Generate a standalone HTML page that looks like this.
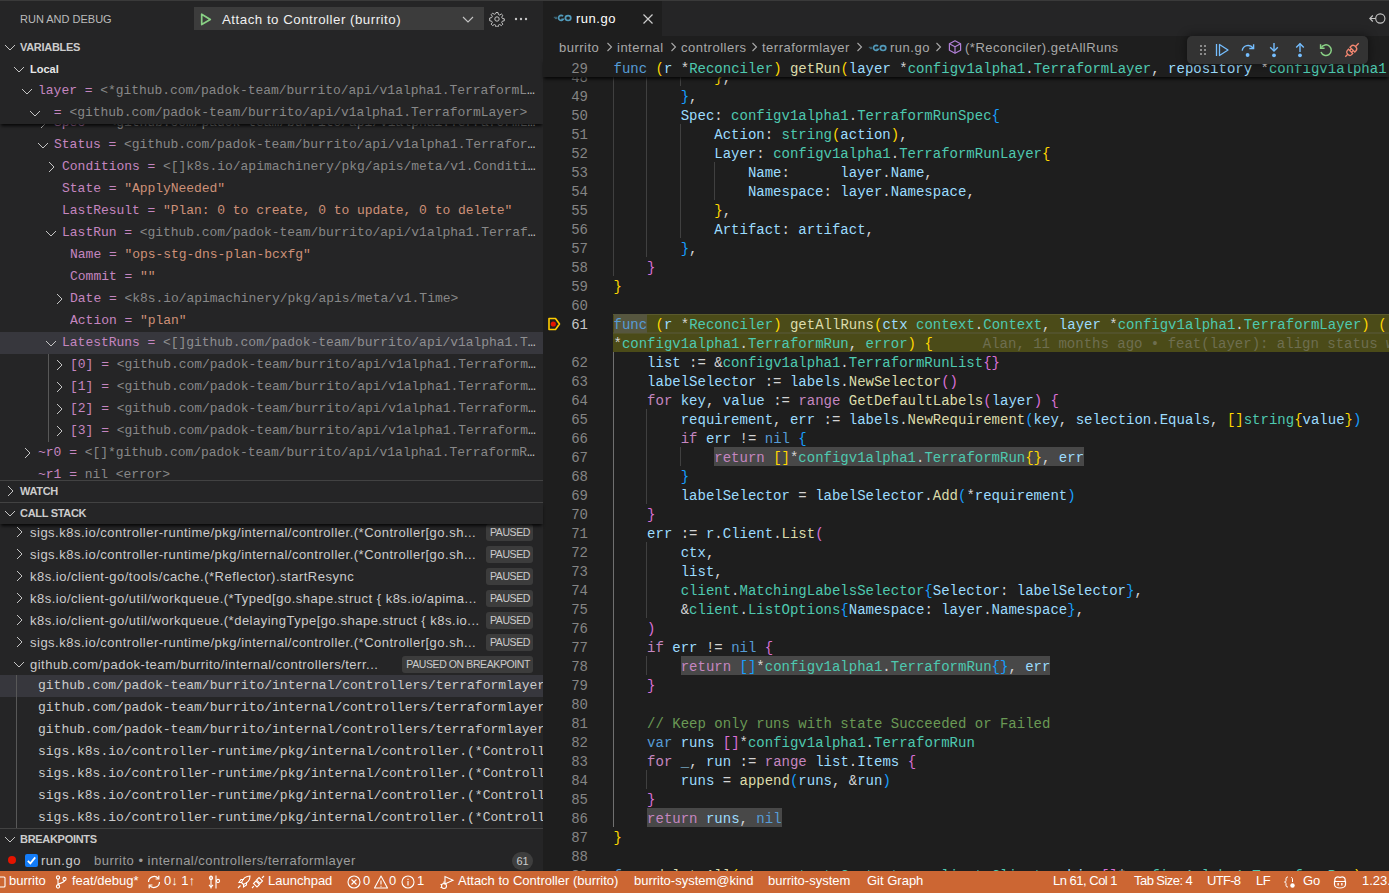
<!DOCTYPE html><html><head><meta charset="utf-8"><style>
*{box-sizing:border-box}
html,body{margin:0;padding:0;width:1389px;height:893px;overflow:hidden;background:#1e1e1e}
body{position:relative;font-family:"Liberation Sans",sans-serif;font-size:13px;color:#cccccc}
.abs{position:absolute;white-space:nowrap}
.ui{font-family:"Liberation Sans",sans-serif;font-size:13px;letter-spacing:0.5px;line-height:16px}
.ph{position:absolute;left:0;width:543px;height:22px}
.ph .lbl{position:absolute;left:20px;top:5px;font-size:11px;line-height:12px;font-weight:bold;color:#cccccc;letter-spacing:-0.3px}
.bt{border-top:1px solid #424242}
.tw{position:absolute;top:3px;width:16px;height:16px}
.tw svg{display:block}
.vr{position:absolute;left:0;width:543px;height:22px;white-space:nowrap}
.vr.sel{background:#37373d}
.vt{position:absolute;top:4px;right:6px;font-family:"Liberation Mono",monospace;font-size:13px;line-height:16px;letter-spacing:-0.04px;overflow:hidden;text-overflow:ellipsis;white-space:pre}
.sticky{position:absolute;left:0;width:543px;background:#252526;box-shadow:0 3px 3px -1px rgba(0,0,0,0.8)}
.cr{position:absolute;left:0;width:543px;height:22px;white-space:nowrap}
.ct{position:absolute;left:30px;top:4px;font-size:13px;line-height:16px;letter-spacing:0.5px;color:#cccccc}
.badge{position:absolute;right:10px;top:3px;height:17px;padding:0 3px 0 4px;background:#3c3c3c;border-radius:3px;font-size:10.5px;line-height:17px;color:#cccccc;letter-spacing:-0.4px;word-spacing:0px}
.fr{position:absolute;left:0;width:543px;height:22px;white-space:nowrap}
.fr.sel{background:#37373d}
.ft{position:absolute;left:38px;top:3px;font-family:"Liberation Mono",monospace;font-size:13px;line-height:16px;color:#cccccc}
.ln{position:absolute;left:0;width:588px;text-align:right;font-family:"Liberation Mono",monospace;font-size:14px;line-height:19px;height:19px;color:#858585;padding-top:2px}
.ln.act{color:#c6c6c6}
.cl{position:absolute;font-family:"Liberation Mono",monospace;font-size:14px;line-height:19px;height:19px;white-space:pre;color:#d4d4d4;padding-top:2px}
.ig{position:absolute;width:1px;height:19px;background:#404040}
.ig.act{background:#707070}
.hl{background:#484848;display:inline-block;height:19px;margin-top:-2px;padding-top:2px;vertical-align:top}
.hlf{background:#56563f;display:inline-block;height:19px;margin-top:-2px;padding-top:2px;vertical-align:top}
.sf{position:absolute;left:613px;width:846px;height:38px;background:#4b4b18}
.blame{color:#6e6e50;margin-left:50px}
.sfb{position:absolute;left:613px;width:846px;height:1px;background:#5a5a2c}
.sb{position:absolute;top:870px;height:22px;font-size:13px;line-height:22px;color:#ffffff;white-space:nowrap;letter-spacing:0px}
.sbi{position:absolute;top:874px}
</style></head><body>
<div class="abs" style="left:0;top:0;width:1389px;height:1px;background:#3a3a3a"></div>
<div class="abs" style="left:0;top:1px;width:543px;height:870px;background:#252526"></div>

<!-- sidebar header -->
<div class="abs" style="left:20px;top:13px;font-size:11px;line-height:12px;color:#bbbbbb;letter-spacing:0px">RUN AND DEBUG</div>
<div class="abs" style="left:194px;top:7px;width:290px;height:23px;background:#3c3c3c"></div>
<svg class="abs" style="left:198px;top:11px" width="16" height="16" viewBox="0 0 16 16"><path d="M3.7 3.2v10.4l8.6-5.2z" fill="none" stroke="#89d185" stroke-width="1.7" stroke-linejoin="round"/></svg>
<div class="abs ui" style="left:222px;top:12px;color:#f0f0f0;font-size:13.3px">Attach to Controller (burrito)</div>
<svg class="abs" style="left:460px;top:11px" width="16" height="16" viewBox="0 0 16 16"><path d="M3 6l5 5 5-5" fill="none" stroke="#c5c5c5" stroke-width="1.1"/></svg>
<svg class="abs" style="left:489px;top:11px" width="16" height="16" viewBox="0 0 16 16"><g fill="none" stroke="#c5c5c5" stroke-width="1"><circle cx="8" cy="8" r="2.2"/><path d="M7 1.5h2l.4 2 1.3.6 1.7-1.1 1.4 1.4-1.1 1.7.6 1.3 2 .4v2l-2 .4-.6 1.3 1.1 1.7-1.4 1.4-1.7-1.1-1.3.6-.4 2H7l-.4-2-1.3-.6-1.7 1.1-1.4-1.4 1.1-1.7-.6-1.3-2-.4V7l2-.4.6-1.3-1.1-1.7 1.4-1.4 1.7 1.1 1.3-.6z"/></g></svg>
<svg class="abs" style="left:513px;top:10px" width="16" height="16" viewBox="0 0 16 16"><g fill="#c5c5c5"><circle cx="3" cy="9" r="1.2"/><circle cx="8" cy="9" r="1.2"/><circle cx="13" cy="9" r="1.2"/></g></svg>

<!-- VARIABLES -->
<div class="ph" style="top:36px"><span class="tw" style="left:2px"><svg width="16" height="16" viewBox="0 0 16 16"><path d="M3 6l5 5 5-5" fill="none" stroke="#c5c5c5" stroke-width="1"/></svg></span><span class="lbl">VARIABLES</span></div>
<div class="abs" style="left:0;top:58px;width:543px;height:422px;overflow:hidden">
 <div class="abs" style="left:0;top:-58px;width:543px;height:893px">
  <div class="vr " style="top:112px"><span class="tw" style="left:34.6px;top:3px"><svg width="16" height="16" viewBox="0 0 16 16"><path d="M6 3l5 5-5 5" fill="none" stroke="#c5c5c5" stroke-width="1"/></svg></span><span class="vt" style="top:3px;left:54.1px"><span style="color:#c586c0">Spec =</span> <span style="color:rgba(204,204,204,0.6)">&lt;github.com/padok-team/burrito/api/v1alpha1.TerraformLayerSpec&gt;</span></span></div>
<div class="vr " style="top:134px"><span class="tw" style="left:34.6px;top:3px"><svg width="16" height="16" viewBox="0 0 16 16"><path d="M3 6l5 5 5-5" fill="none" stroke="#c5c5c5" stroke-width="1"/></svg></span><span class="vt" style="top:3px;left:54.1px"><span style="color:#c586c0">Status =</span> <span style="color:rgba(204,204,204,0.6)">&lt;github.com/padok-team/burrito/api/v1alpha1.TerraformLayerStatus&gt;</span></span></div>
<div class="vr " style="top:156px"><span class="tw" style="left:42.6px;top:3px"><svg width="16" height="16" viewBox="0 0 16 16"><path d="M6 3l5 5-5 5" fill="none" stroke="#c5c5c5" stroke-width="1"/></svg></span><span class="vt" style="top:3px;left:62.1px"><span style="color:#c586c0">Conditions =</span> <span style="color:rgba(204,204,204,0.6)">&lt;[]k8s.io/apimachinery/pkg/apis/meta/v1.Condition&gt; (length: 1)</span></span></div>
<div class="vr " style="top:178px"><span class="vt" style="top:3px;left:62.1px"><span style="color:#c586c0">State =</span> <span style="color:#ce9178">&quot;ApplyNeeded&quot;</span></span></div>
<div class="vr " style="top:200px"><span class="vt" style="top:3px;left:62.1px"><span style="color:#c586c0">LastResult =</span> <span style="color:#ce9178">&quot;Plan: 0 to create, 0 to update, 0 to delete&quot;</span></span></div>
<div class="vr " style="top:222px"><span class="tw" style="left:42.6px;top:3px"><svg width="16" height="16" viewBox="0 0 16 16"><path d="M3 6l5 5 5-5" fill="none" stroke="#c5c5c5" stroke-width="1"/></svg></span><span class="vt" style="top:3px;left:62.1px"><span style="color:#c586c0">LastRun =</span> <span style="color:rgba(204,204,204,0.6)">&lt;github.com/padok-team/burrito/api/v1alpha1.TerraformLayerRun&gt;</span></span></div>
<div class="vr " style="top:244px"><span class="vt" style="top:3px;left:70.1px"><span style="color:#c586c0">Name =</span> <span style="color:#ce9178">&quot;ops-stg-dns-plan-bcxfg&quot;</span></span></div>
<div class="vr " style="top:266px"><span class="vt" style="top:3px;left:70.1px"><span style="color:#c586c0">Commit =</span> <span style="color:#ce9178">&quot;&quot;</span></span></div>
<div class="vr " style="top:288px"><span class="tw" style="left:50.6px;top:3px"><svg width="16" height="16" viewBox="0 0 16 16"><path d="M6 3l5 5-5 5" fill="none" stroke="#c5c5c5" stroke-width="1"/></svg></span><span class="vt" style="top:3px;left:70.1px"><span style="color:#c586c0">Date =</span> <span style="color:rgba(204,204,204,0.6)">&lt;k8s.io/apimachinery/pkg/apis/meta/v1.Time&gt;</span></span></div>
<div class="vr " style="top:310px"><span class="vt" style="top:3px;left:70.1px"><span style="color:#c586c0">Action =</span> <span style="color:#ce9178">&quot;plan&quot;</span></span></div>
<div class="vr sel" style="top:332px"><span class="tw" style="left:42.6px;top:3px"><svg width="16" height="16" viewBox="0 0 16 16"><path d="M3 6l5 5 5-5" fill="none" stroke="#c5c5c5" stroke-width="1"/></svg></span><span class="vt" style="top:3px;left:62.1px"><span style="color:#c586c0">LatestRuns =</span> <span style="color:rgba(204,204,204,0.6)">&lt;[]github.com/padok-team/burrito/api/v1alpha1.TerraformLayerRun&gt; (length: 4)</span></span></div>
<div class="vr " style="top:354px"><span class="tw" style="left:50.6px;top:3px"><svg width="16" height="16" viewBox="0 0 16 16"><path d="M6 3l5 5-5 5" fill="none" stroke="#c5c5c5" stroke-width="1"/></svg></span><span class="vt" style="top:3px;left:70.1px"><span style="color:#c586c0">[0] =</span> <span style="color:rgba(204,204,204,0.6)">&lt;github.com/padok-team/burrito/api/v1alpha1.TerraformLayerRun&gt;</span></span></div>
<div class="vr " style="top:376px"><span class="tw" style="left:50.6px;top:3px"><svg width="16" height="16" viewBox="0 0 16 16"><path d="M6 3l5 5-5 5" fill="none" stroke="#c5c5c5" stroke-width="1"/></svg></span><span class="vt" style="top:3px;left:70.1px"><span style="color:#c586c0">[1] =</span> <span style="color:rgba(204,204,204,0.6)">&lt;github.com/padok-team/burrito/api/v1alpha1.TerraformLayerRun&gt;</span></span></div>
<div class="vr " style="top:398px"><span class="tw" style="left:50.6px;top:3px"><svg width="16" height="16" viewBox="0 0 16 16"><path d="M6 3l5 5-5 5" fill="none" stroke="#c5c5c5" stroke-width="1"/></svg></span><span class="vt" style="top:3px;left:70.1px"><span style="color:#c586c0">[2] =</span> <span style="color:rgba(204,204,204,0.6)">&lt;github.com/padok-team/burrito/api/v1alpha1.TerraformLayerRun&gt;</span></span></div>
<div class="vr " style="top:420px"><span class="tw" style="left:50.6px;top:3px"><svg width="16" height="16" viewBox="0 0 16 16"><path d="M6 3l5 5-5 5" fill="none" stroke="#c5c5c5" stroke-width="1"/></svg></span><span class="vt" style="top:3px;left:70.1px"><span style="color:#c586c0">[3] =</span> <span style="color:rgba(204,204,204,0.6)">&lt;github.com/padok-team/burrito/api/v1alpha1.TerraformLayerRun&gt;</span></span></div>
<div class="vr " style="top:442px"><span class="tw" style="left:18.6px;top:3px"><svg width="16" height="16" viewBox="0 0 16 16"><path d="M6 3l5 5-5 5" fill="none" stroke="#c5c5c5" stroke-width="1"/></svg></span><span class="vt" style="top:3px;left:38.1px"><span style="color:#c586c0">~r0 =</span> <span style="color:rgba(204,204,204,0.6)">&lt;[]*github.com/padok-team/burrito/api/v1alpha1.TerraformRun&gt;</span></span></div>
<div class="vr " style="top:464px"><span class="vt" style="top:3px;left:38.1px"><span style="color:#c586c0">~r1 =</span> <span style="color:rgba(204,204,204,0.6)">nil &lt;error&gt;</span></span></div>
  <div class="abs" style="left:48px;top:354px;width:1px;height:88px;background:#585858"></div>
  <div class="sticky" style="top:58px;height:66px"></div>
  <div class="vr" style="top:58px"><span class="tw" style="left:11px"><svg width="16" height="16" viewBox="0 0 16 16"><path d="M3 6l5 5 5-5" fill="none" stroke="#c5c5c5" stroke-width="1"/></svg></span><span class="abs" style="left:30px;top:5px;font-size:11px;line-height:12px;font-weight:bold;color:#e7e7e7">Local</span></div>
  <div class="vr " style="top:80px"><span class="tw" style="left:19.1px;top:3px"><svg width="16" height="16" viewBox="0 0 16 16"><path d="M3 6l5 5 5-5" fill="none" stroke="#c5c5c5" stroke-width="1"/></svg></span><span class="vt" style="top:3px;left:38.1px"><span style="color:#c586c0">layer =</span> <span style="color:rgba(204,204,204,0.6)">&lt;*github.com/padok-team/burrito/api/v1alpha1.TerraformLayer&gt;</span></span></div>
  <div class="vr " style="top:102px"><span class="tw" style="left:26.6px;top:3px"><svg width="16" height="16" viewBox="0 0 16 16"><path d="M3 6l5 5 5-5" fill="none" stroke="#c5c5c5" stroke-width="1"/></svg></span><span class="vt" style="top:3px;left:46.1px"><span style="color:#c586c0"> =</span> <span style="color:rgba(204,204,204,0.6)">&lt;github.com/padok-team/burrito/api/v1alpha1.TerraformLayer&gt;</span></span></div>
 </div>
</div>

<!-- WATCH -->
<div class="ph bt" style="top:480px"><span class="tw" style="left:2px;top:2px"><svg width="16" height="16" viewBox="0 0 16 16"><path d="M6 3l5 5-5 5" fill="none" stroke="#c5c5c5" stroke-width="1"/></svg></span><span class="lbl" style="top:4px">WATCH</span></div>
<!-- CALL STACK -->
<div class="abs" style="left:0;top:524px;width:543px;height:304px;overflow:hidden">
 <div class="abs" style="left:0;top:-524px;width:543px;height:893px">
  <div class="cr" style="top:521px"><span class="tw" style="left:11px"><svg width="16" height="16" viewBox="0 0 16 16"><path d="M6 3l5 5-5 5" fill="none" stroke="#c5c5c5" stroke-width="1"/></svg></span><span class="ct">sigs.k8s.io/controller-runtime/pkg/internal/controller.(*Controller[go.sh...</span><span class="badge">PAUSED</span></div>
<div class="cr" style="top:543px"><span class="tw" style="left:11px"><svg width="16" height="16" viewBox="0 0 16 16"><path d="M6 3l5 5-5 5" fill="none" stroke="#c5c5c5" stroke-width="1"/></svg></span><span class="ct">sigs.k8s.io/controller-runtime/pkg/internal/controller.(*Controller[go.sh...</span><span class="badge">PAUSED</span></div>
<div class="cr" style="top:565px"><span class="tw" style="left:11px"><svg width="16" height="16" viewBox="0 0 16 16"><path d="M6 3l5 5-5 5" fill="none" stroke="#c5c5c5" stroke-width="1"/></svg></span><span class="ct">k8s.io/client-go/tools/cache.(*Reflector).startResync</span><span class="badge">PAUSED</span></div>
<div class="cr" style="top:587px"><span class="tw" style="left:11px"><svg width="16" height="16" viewBox="0 0 16 16"><path d="M6 3l5 5-5 5" fill="none" stroke="#c5c5c5" stroke-width="1"/></svg></span><span class="ct">k8s.io/client-go/util/workqueue.(*Typed[go.shape.struct { k8s.io/apima...</span><span class="badge">PAUSED</span></div>
<div class="cr" style="top:609px"><span class="tw" style="left:11px"><svg width="16" height="16" viewBox="0 0 16 16"><path d="M6 3l5 5-5 5" fill="none" stroke="#c5c5c5" stroke-width="1"/></svg></span><span class="ct">k8s.io/client-go/util/workqueue.(*delayingType[go.shape.struct { k8s.io...</span><span class="badge">PAUSED</span></div>
<div class="cr" style="top:631px"><span class="tw" style="left:11px"><svg width="16" height="16" viewBox="0 0 16 16"><path d="M6 3l5 5-5 5" fill="none" stroke="#c5c5c5" stroke-width="1"/></svg></span><span class="ct">sigs.k8s.io/controller-runtime/pkg/internal/controller.(*Controller[go.sh...</span><span class="badge">PAUSED</span></div>
<div class="cr" style="top:653px"><span class="tw" style="left:11px"><svg width="16" height="16" viewBox="0 0 16 16"><path d="M3 6l5 5 5-5" fill="none" stroke="#c5c5c5" stroke-width="1"/></svg></span><span class="ct">github.com/padok-team/burrito/internal/controllers/terr...</span><span class="badge">PAUSED ON BREAKPOINT</span></div>
<div class="fr sel" style="top:675px"><span class="ft">github.com/padok-team/burrito/internal/controllers/terraformlayer.(*Reconciler).getAllRuns</span></div>
<div class="fr" style="top:697px"><span class="ft">github.com/padok-team/burrito/internal/controllers/terraformlayer.(*Reconciler).getAllRuns</span></div>
<div class="fr" style="top:719px"><span class="ft">github.com/padok-team/burrito/internal/controllers/terraformlayer.(*Reconciler).getAllRuns</span></div>
<div class="fr" style="top:741px"><span class="ft">sigs.k8s.io/controller-runtime/pkg/internal/controller.(*Controller).reconcileHandler</span></div>
<div class="fr" style="top:763px"><span class="ft">sigs.k8s.io/controller-runtime/pkg/internal/controller.(*Controller).reconcileHandler</span></div>
<div class="fr" style="top:785px"><span class="ft">sigs.k8s.io/controller-runtime/pkg/internal/controller.(*Controller).reconcileHandler</span></div>
<div class="fr" style="top:807px"><span class="ft">sigs.k8s.io/controller-runtime/pkg/internal/controller.(*Controller).reconcileHandler</span></div>
  <div class="abs" style="left:16px;top:675px;width:1px;height:153px;background:#585858"></div>
 </div>
</div>
<div class="ph bt" style="top:502px;background:#252526;box-shadow:0 3px 3px -1px rgba(0,0,0,0.8)"><span class="tw" style="left:2px;top:2px"><svg width="16" height="16" viewBox="0 0 16 16"><path d="M3 6l5 5 5-5" fill="none" stroke="#c5c5c5" stroke-width="1"/></svg></span><span class="lbl" style="top:4px">CALL STACK</span></div>
<!-- BREAKPOINTS -->
<div class="ph bt" style="top:828px"><span class="tw" style="left:2px;top:2px"><svg width="16" height="16" viewBox="0 0 16 16"><path d="M3 6l5 5 5-5" fill="none" stroke="#c5c5c5" stroke-width="1"/></svg></span><span class="lbl" style="top:4px">BREAKPOINTS</span></div>
<div class="abs" style="left:0;top:850px;width:543px;height:21px">
 <div class="abs" style="left:8px;top:6px;width:8px;height:8px;border-radius:50%;background:#e51400"></div>
 <div class="abs" style="left:25px;top:4px;width:13px;height:13px;border-radius:2px;background:#137cf8"></div>
 <svg class="abs" style="left:25px;top:4px" width="13" height="13" viewBox="0 0 13 13"><path d="M2.8 6.8l2.6 2.6 4.8-6" fill="none" stroke="#fff" stroke-width="1.7"/></svg>
 <span class="abs ui" style="left:41px;top:3px;color:#cccccc">run.go</span>
 <span class="abs ui" style="left:94px;top:3px;color:#9d9d9d">burrito • internal/controllers/terraformlayer</span>
 <div class="abs" style="left:512px;top:2px;width:21px;height:18px;border-radius:9px;background:#3e3e3e;color:#cccccc;font-size:11px;line-height:18px;text-align:center">61</div>
</div>

<!-- EDITOR -->
<div class="abs" style="left:543px;top:1px;width:846px;height:35px;background:#252526"></div>
<div class="abs" style="left:543px;top:1px;width:119px;height:35px;background:#1e1e1e"></div>
<svg class="abs" style="left:553px;top:12px" width="20" height="12" viewBox="0 0 20 12"><g fill="none" stroke="#519aba" stroke-width="1.7"><path d="M10 4.3A2.5 2.5 0 1 0 10.2 7.3H8.4"/><ellipse cx="15.1" cy="6.1" rx="2.7" ry="2.4"/></g><path d="M0.8 5.3h3.5M1.8 6.6h2.5" stroke="#519aba" stroke-width="0.8" opacity="0.8"/></svg>
<div class="abs ui" style="left:576px;top:11px;color:#ffffff">run.go</div>
<svg class="abs" style="left:640px;top:11px" width="16" height="16" viewBox="0 0 16 16"><path d="M3.5 3.5l9 9M12.5 3.5l-9 9" stroke="#cccccc" stroke-width="1.2"/></svg>
<svg class="abs" style="left:1368px;top:10px" width="18" height="16" viewBox="0 0 18 16"><g fill="none" stroke="#c5c5c5" stroke-width="1.1"><circle cx="12.3" cy="8.5" r="4.6"/><path d="M1.8 8.5h5.9M4.8 5.5l-3 3 3 3"/></g></svg>

<!-- breadcrumbs -->
<div class="abs ui" style="left:559px;top:40px;color:#a9a9a9">burrito</div>
<svg class="abs" style="left:604px;top:39px" width="12" height="16" viewBox="0 0 12 16"><path d="M3.5 4l4 4-4 4" fill="none" stroke="#a9a9a9" stroke-width="1.1"/></svg>
<div class="abs ui" style="left:617px;top:40px;color:#a9a9a9">internal</div>
<svg class="abs" style="left:668px;top:39px" width="12" height="16" viewBox="0 0 12 16"><path d="M3.5 4l4 4-4 4" fill="none" stroke="#a9a9a9" stroke-width="1.1"/></svg>
<div class="abs ui" style="left:681px;top:40px;color:#a9a9a9">controllers</div>
<svg class="abs" style="left:749px;top:39px" width="12" height="16" viewBox="0 0 12 16"><path d="M3.5 4l4 4-4 4" fill="none" stroke="#a9a9a9" stroke-width="1.1"/></svg>
<div class="abs ui" style="left:762px;top:40px;color:#a9a9a9">terraformlayer</div>
<svg class="abs" style="left:854px;top:39px" width="12" height="16" viewBox="0 0 12 16"><path d="M3.5 4l4 4-4 4" fill="none" stroke="#a9a9a9" stroke-width="1.1"/></svg>
<svg class="abs" style="left:868px;top:42px" width="20" height="12" viewBox="0 0 20 12"><g fill="none" stroke="#519aba" stroke-width="1.7"><path d="M10 4.3A2.5 2.5 0 1 0 10.2 7.3H8.4"/><ellipse cx="15.1" cy="6.1" rx="2.7" ry="2.4"/></g><path d="M0.8 5.3h3.5M1.8 6.6h2.5" stroke="#519aba" stroke-width="0.8" opacity="0.8"/></svg>
<div class="abs ui" style="left:890px;top:40px;color:#a9a9a9">run.go</div>
<svg class="abs" style="left:933px;top:39px" width="12" height="16" viewBox="0 0 12 16"><path d="M3.5 4l4 4-4 4" fill="none" stroke="#a9a9a9" stroke-width="1.1"/></svg>
<svg class="abs" style="left:947px;top:39px" width="16" height="16" viewBox="0 0 16 16"><g fill="none" stroke="#b180d7" stroke-width="1.2" stroke-linejoin="round"><path d="M8 1.8l5.6 3v6.4L8 14.2l-5.6-3V4.8z"/><path d="M2.4 4.8L8 7.8l5.6-3M8 7.8v6.4"/></g></svg>
<div class="abs ui" style="left:965px;top:40px;color:#a9a9a9">(*Reconciler).getAllRuns</div>

<div class="abs" style="left:543px;top:58px;width:846px;height:813px;overflow:hidden">
 <div class="abs" style="left:-543px;top:-58px;width:1389px;height:893px">
  <div class="ln" style="top:67.0px">48</div>
<div class="ig" style="top:67.0px;left:613px"></div>
<div class="ig" style="top:67.0px;left:646px"></div>
<div class="ig" style="top:67.0px;left:680px"></div>
<div class="cl" style="top:67.0px;left:714.3px"><span style="color:#ffd700">}</span>,</div>
<div class="ln" style="top:86.0px">49</div>
<div class="ig" style="top:86.0px;left:613px"></div>
<div class="ig" style="top:86.0px;left:646px"></div>
<div class="cl" style="top:86.0px;left:680.7px"><span style="color:#179fff">}</span>,</div>
<div class="ln" style="top:105.0px">50</div>
<div class="ig" style="top:105.0px;left:613px"></div>
<div class="ig" style="top:105.0px;left:646px"></div>
<div class="cl" style="top:105.0px;left:680.7px"><span style="color:#9cdcfe">Spec</span>: <span style="color:#4ec9b0">configv1alpha1</span>.<span style="color:#4ec9b0">TerraformRunSpec</span><span style="color:#179fff">{</span></div>
<div class="ln" style="top:124.0px">51</div>
<div class="ig" style="top:124.0px;left:613px"></div>
<div class="ig" style="top:124.0px;left:646px"></div>
<div class="ig" style="top:124.0px;left:680px"></div>
<div class="cl" style="top:124.0px;left:714.3px"><span style="color:#9cdcfe">Action</span>: <span style="color:#4ec9b0">string</span><span style="color:#ffd700">(</span><span style="color:#9cdcfe">action</span><span style="color:#ffd700">)</span>,</div>
<div class="ln" style="top:143.0px">52</div>
<div class="ig" style="top:143.0px;left:613px"></div>
<div class="ig" style="top:143.0px;left:646px"></div>
<div class="ig" style="top:143.0px;left:680px"></div>
<div class="cl" style="top:143.0px;left:714.3px"><span style="color:#9cdcfe">Layer</span>: <span style="color:#4ec9b0">configv1alpha1</span>.<span style="color:#4ec9b0">TerraformRunLayer</span><span style="color:#ffd700">{</span></div>
<div class="ln" style="top:162.0px">53</div>
<div class="ig" style="top:162.0px;left:613px"></div>
<div class="ig" style="top:162.0px;left:646px"></div>
<div class="ig" style="top:162.0px;left:680px"></div>
<div class="ig" style="top:162.0px;left:714px"></div>
<div class="cl" style="top:162.0px;left:747.9px"><span style="color:#9cdcfe">Name</span>:      <span style="color:#9cdcfe">layer</span>.<span style="color:#9cdcfe">Name</span>,</div>
<div class="ln" style="top:181.0px">54</div>
<div class="ig" style="top:181.0px;left:613px"></div>
<div class="ig" style="top:181.0px;left:646px"></div>
<div class="ig" style="top:181.0px;left:680px"></div>
<div class="ig" style="top:181.0px;left:714px"></div>
<div class="cl" style="top:181.0px;left:747.9px"><span style="color:#9cdcfe">Namespace</span>: <span style="color:#9cdcfe">layer</span>.<span style="color:#9cdcfe">Namespace</span>,</div>
<div class="ln" style="top:200.0px">55</div>
<div class="ig" style="top:200.0px;left:613px"></div>
<div class="ig" style="top:200.0px;left:646px"></div>
<div class="ig" style="top:200.0px;left:680px"></div>
<div class="cl" style="top:200.0px;left:714.3px"><span style="color:#ffd700">}</span>,</div>
<div class="ln" style="top:219.0px">56</div>
<div class="ig" style="top:219.0px;left:613px"></div>
<div class="ig" style="top:219.0px;left:646px"></div>
<div class="ig" style="top:219.0px;left:680px"></div>
<div class="cl" style="top:219.0px;left:714.3px"><span style="color:#9cdcfe">Artifact</span>: <span style="color:#9cdcfe">artifact</span>,</div>
<div class="ln" style="top:238.0px">57</div>
<div class="ig" style="top:238.0px;left:613px"></div>
<div class="ig" style="top:238.0px;left:646px"></div>
<div class="cl" style="top:238.0px;left:680.7px"><span style="color:#179fff">}</span>,</div>
<div class="ln" style="top:257.0px">58</div>
<div class="ig" style="top:257.0px;left:613px"></div>
<div class="cl" style="top:257.0px;left:647.1px"><span style="color:#da70d6">}</span></div>
<div class="ln" style="top:276.0px">59</div>
<div class="cl" style="top:276.0px;left:613.5px"><span style="color:#ffd700">}</span></div>
<div class="ln" style="top:295.0px">60</div>
<div class="ln" style="top:352.0px">62</div>
<div class="ig act" style="top:352.0px;left:613px"></div>
<div class="cl" style="top:352.0px;left:647.1px"><span style="color:#9cdcfe">list</span> := &amp;<span style="color:#4ec9b0">configv1alpha1</span>.<span style="color:#4ec9b0">TerraformRunList</span><span style="color:#da70d6">{}</span></div>
<div class="ln" style="top:371.0px">63</div>
<div class="ig act" style="top:371.0px;left:613px"></div>
<div class="cl" style="top:371.0px;left:647.1px"><span style="color:#9cdcfe">labelSelector</span> := <span style="color:#9cdcfe">labels</span>.<span style="color:#dcdcaa">NewSelector</span><span style="color:#da70d6">()</span></div>
<div class="ln" style="top:390.0px">64</div>
<div class="ig act" style="top:390.0px;left:613px"></div>
<div class="cl" style="top:390.0px;left:647.1px"><span style="color:#c586c0">for</span> <span style="color:#9cdcfe">key</span>, <span style="color:#9cdcfe">value</span> := <span style="color:#c586c0">range</span> <span style="color:#dcdcaa">GetDefaultLabels</span><span style="color:#da70d6">(</span><span style="color:#9cdcfe">layer</span><span style="color:#da70d6">)</span> <span style="color:#da70d6">{</span></div>
<div class="ln" style="top:409.0px">65</div>
<div class="ig act" style="top:409.0px;left:613px"></div>
<div class="ig" style="top:409.0px;left:646px"></div>
<div class="cl" style="top:409.0px;left:680.7px"><span style="color:#9cdcfe">requirement</span>, <span style="color:#9cdcfe">err</span> := <span style="color:#9cdcfe">labels</span>.<span style="color:#dcdcaa">NewRequirement</span><span style="color:#179fff">(</span><span style="color:#9cdcfe">key</span>, <span style="color:#9cdcfe">selection</span>.<span style="color:#9cdcfe">Equals</span>, <span style="color:#ffd700">[]</span><span style="color:#4ec9b0">string</span><span style="color:#ffd700">{</span><span style="color:#9cdcfe">value</span><span style="color:#ffd700">}</span><span style="color:#179fff">)</span></div>
<div class="ln" style="top:428.0px">66</div>
<div class="ig act" style="top:428.0px;left:613px"></div>
<div class="ig" style="top:428.0px;left:646px"></div>
<div class="cl" style="top:428.0px;left:680.7px"><span style="color:#c586c0">if</span> <span style="color:#9cdcfe">err</span> != <span style="color:#569cd6">nil</span> <span style="color:#179fff">{</span></div>
<div class="ln" style="top:447.0px">67</div>
<div class="ig act" style="top:447.0px;left:613px"></div>
<div class="ig" style="top:447.0px;left:646px"></div>
<div class="ig" style="top:447.0px;left:680px"></div>
<div class="cl" style="top:447.0px;left:714.3px"><span class="hl"><span style="color:#c586c0">return</span> <span style="color:#ffd700">[]</span>*<span style="color:#4ec9b0">configv1alpha1</span>.<span style="color:#4ec9b0">TerraformRun</span><span style="color:#ffd700">{}</span>, <span style="color:#9cdcfe">err</span></span></div>
<div class="ln" style="top:466.0px">68</div>
<div class="ig act" style="top:466.0px;left:613px"></div>
<div class="ig" style="top:466.0px;left:646px"></div>
<div class="cl" style="top:466.0px;left:680.7px"><span style="color:#179fff">}</span></div>
<div class="ln" style="top:485.0px">69</div>
<div class="ig act" style="top:485.0px;left:613px"></div>
<div class="ig" style="top:485.0px;left:646px"></div>
<div class="cl" style="top:485.0px;left:680.7px"><span style="color:#9cdcfe">labelSelector</span> = <span style="color:#9cdcfe">labelSelector</span>.<span style="color:#dcdcaa">Add</span><span style="color:#179fff">(</span>*<span style="color:#9cdcfe">requirement</span><span style="color:#179fff">)</span></div>
<div class="ln" style="top:504.0px">70</div>
<div class="ig act" style="top:504.0px;left:613px"></div>
<div class="cl" style="top:504.0px;left:647.1px"><span style="color:#da70d6">}</span></div>
<div class="ln" style="top:523.0px">71</div>
<div class="ig act" style="top:523.0px;left:613px"></div>
<div class="cl" style="top:523.0px;left:647.1px"><span style="color:#9cdcfe">err</span> := <span style="color:#9cdcfe">r</span>.<span style="color:#9cdcfe">Client</span>.<span style="color:#dcdcaa">List</span><span style="color:#da70d6">(</span></div>
<div class="ln" style="top:542.0px">72</div>
<div class="ig act" style="top:542.0px;left:613px"></div>
<div class="ig" style="top:542.0px;left:646px"></div>
<div class="cl" style="top:542.0px;left:680.7px"><span style="color:#9cdcfe">ctx</span>,</div>
<div class="ln" style="top:561.0px">73</div>
<div class="ig act" style="top:561.0px;left:613px"></div>
<div class="ig" style="top:561.0px;left:646px"></div>
<div class="cl" style="top:561.0px;left:680.7px"><span style="color:#9cdcfe">list</span>,</div>
<div class="ln" style="top:580.0px">74</div>
<div class="ig act" style="top:580.0px;left:613px"></div>
<div class="ig" style="top:580.0px;left:646px"></div>
<div class="cl" style="top:580.0px;left:680.7px"><span style="color:#4ec9b0">client</span>.<span style="color:#4ec9b0">MatchingLabelsSelector</span><span style="color:#179fff">{</span><span style="color:#9cdcfe">Selector</span>: <span style="color:#9cdcfe">labelSelector</span><span style="color:#179fff">}</span>,</div>
<div class="ln" style="top:599.0px">75</div>
<div class="ig act" style="top:599.0px;left:613px"></div>
<div class="ig" style="top:599.0px;left:646px"></div>
<div class="cl" style="top:599.0px;left:680.7px">&amp;<span style="color:#4ec9b0">client</span>.<span style="color:#4ec9b0">ListOptions</span><span style="color:#179fff">{</span><span style="color:#9cdcfe">Namespace</span>: <span style="color:#9cdcfe">layer</span>.<span style="color:#9cdcfe">Namespace</span><span style="color:#179fff">}</span>,</div>
<div class="ln" style="top:618.0px">76</div>
<div class="ig act" style="top:618.0px;left:613px"></div>
<div class="cl" style="top:618.0px;left:647.1px"><span style="color:#da70d6">)</span></div>
<div class="ln" style="top:637.0px">77</div>
<div class="ig act" style="top:637.0px;left:613px"></div>
<div class="cl" style="top:637.0px;left:647.1px"><span style="color:#c586c0">if</span> <span style="color:#9cdcfe">err</span> != <span style="color:#569cd6">nil</span> <span style="color:#da70d6">{</span></div>
<div class="ln" style="top:656.0px">78</div>
<div class="ig act" style="top:656.0px;left:613px"></div>
<div class="ig" style="top:656.0px;left:646px"></div>
<div class="cl" style="top:656.0px;left:680.7px"><span class="hl"><span style="color:#c586c0">return</span> <span style="color:#179fff">[]</span>*<span style="color:#4ec9b0">configv1alpha1</span>.<span style="color:#4ec9b0">TerraformRun</span><span style="color:#179fff">{}</span>, <span style="color:#9cdcfe">err</span></span></div>
<div class="ln" style="top:675.0px">79</div>
<div class="ig act" style="top:675.0px;left:613px"></div>
<div class="cl" style="top:675.0px;left:647.1px"><span style="color:#da70d6">}</span></div>
<div class="ln" style="top:694.0px">80</div>
<div class="ig act" style="top:694.0px;left:613px"></div>
<div class="ln" style="top:713.0px">81</div>
<div class="ig act" style="top:713.0px;left:613px"></div>
<div class="cl" style="top:713.0px;left:647.1px"><span style="color:#6a9955">// Keep only runs with state Succeeded or Failed</span></div>
<div class="ln" style="top:732.0px">82</div>
<div class="ig act" style="top:732.0px;left:613px"></div>
<div class="cl" style="top:732.0px;left:647.1px"><span style="color:#569cd6">var</span> <span style="color:#9cdcfe">runs</span> <span style="color:#da70d6">[]</span>*<span style="color:#4ec9b0">configv1alpha1</span>.<span style="color:#4ec9b0">TerraformRun</span></div>
<div class="ln" style="top:751.0px">83</div>
<div class="ig act" style="top:751.0px;left:613px"></div>
<div class="cl" style="top:751.0px;left:647.1px"><span style="color:#c586c0">for</span> <span style="color:#9cdcfe">_</span>, <span style="color:#9cdcfe">run</span> := <span style="color:#c586c0">range</span> <span style="color:#9cdcfe">list</span>.<span style="color:#9cdcfe">Items</span> <span style="color:#da70d6">{</span></div>
<div class="ln" style="top:770.0px">84</div>
<div class="ig act" style="top:770.0px;left:613px"></div>
<div class="ig" style="top:770.0px;left:646px"></div>
<div class="cl" style="top:770.0px;left:680.7px"><span style="color:#9cdcfe">runs</span> = <span style="color:#dcdcaa">append</span><span style="color:#179fff">(</span><span style="color:#9cdcfe">runs</span>, &amp;<span style="color:#9cdcfe">run</span><span style="color:#179fff">)</span></div>
<div class="ln" style="top:789.0px">85</div>
<div class="ig act" style="top:789.0px;left:613px"></div>
<div class="cl" style="top:789.0px;left:647.1px"><span style="color:#da70d6">}</span></div>
<div class="ln" style="top:808.0px">86</div>
<div class="ig act" style="top:808.0px;left:613px"></div>
<div class="cl" style="top:808.0px;left:647.1px"><span class="hl"><span style="color:#c586c0">return</span> <span style="color:#9cdcfe">runs</span>, <span style="color:#569cd6">nil</span></span></div>
<div class="ln" style="top:827.0px">87</div>
<div class="cl" style="top:827.0px;left:613.5px"><span style="color:#ffd700">}</span></div>
<div class="ln" style="top:846.0px">88</div>
<div class="ln" style="top:865.0px">89</div>
<div class="cl" style="top:865.0px;left:613.5px"><span style="color:#569cd6">func</span> <span style="color:#dcdcaa">deleteAll</span><span style="color:#ffd700">(</span><span style="color:#9cdcfe">ctx</span> <span style="color:#4ec9b0">context</span>.<span style="color:#4ec9b0">Context</span>, <span style="color:#9cdcfe">c</span> <span style="color:#4ec9b0">client</span>.<span style="color:#4ec9b0">Client</span>, <span style="color:#9cdcfe">objs</span> <span style="color:#da70d6">[]</span>*<span style="color:#4ec9b0">configv1alpha1</span>.<span style="color:#4ec9b0">TerraformRun</span><span style="color:#ffd700">)</span> <span style="color:#4ec9b0">error</span> <span style="color:#ffd700">{</span></div>
<div class="sf" style="top:314.0px"></div><div class="sfb" style="top:314.0px"></div><div class="sfb" style="top:332.0px;height:2px;background:#52522a"></div>
<div class="ln act" style="top:314.0px">61</div>
<div class="cl" style="top:314.0px;left:613.5px"><span class="hlf"><span style="color:#569cd6">func</span></span> <span style="color:#ffd700">(</span><span style="color:#9cdcfe">r</span> *<span style="color:#4ec9b0">Reconciler</span><span style="color:#ffd700">)</span> <span style="color:#dcdcaa">getAllRuns</span><span style="color:#ffd700">(</span><span style="color:#9cdcfe">ctx</span> <span style="color:#4ec9b0">context</span>.<span style="color:#4ec9b0">Context</span>, <span style="color:#9cdcfe">layer</span> *<span style="color:#4ec9b0">configv1alpha1</span>.<span style="color:#4ec9b0">TerraformLayer</span><span style="color:#ffd700">)</span> <span style="color:#ffd700">(</span></div>
<div class="cl" style="top:333.0px;left:613.5px">*<span style="color:#4ec9b0">configv1alpha1</span>.<span style="color:#4ec9b0">TerraformRun</span>, <span style="color:#4ec9b0">error</span><span style="color:#ffd700">)</span> <span style="color:#ffd700">{</span><span class="blame">Alan, 11 months ago • feat(layer): align status with</span></div>
  <svg class="abs" style="left:547px;top:316px" width="14" height="16" viewBox="0 0 14 16"><path d="M2 2.5h6.5l4 5.5-4 5.5H2z" fill="none" stroke="#ffcc00" stroke-width="1.6" stroke-linejoin="round"/><circle cx="6.3" cy="8" r="2.6" fill="#e51400"/></svg>
 </div>
</div>
<!-- sticky scroll -->
<div class="abs" style="left:543px;top:58px;width:846px;height:19px;background:#1e1e1e;box-shadow:0 3px 3px -1px rgba(0,0,0,0.8)"></div>
<div class="ln" style="top:58px">29</div>
<div class="cl" style="top:58px;left:613.5px"><span style="color:#569cd6">func</span> <span style="color:#ffd700">(</span><span style="color:#9cdcfe">r</span> *<span style="color:#4ec9b0">Reconciler</span><span style="color:#ffd700">)</span> <span style="color:#dcdcaa">getRun</span><span style="color:#ffd700">(</span><span style="color:#9cdcfe">layer</span> *<span style="color:#4ec9b0">configv1alpha1</span>.<span style="color:#4ec9b0">TerraformLayer</span>, <span style="color:#9cdcfe">repository</span> *<span style="color:#4ec9b0">configv1alpha1</span>.<span style="color:#4ec9b0">TerraformRepository</span></div>

<!-- debug toolbar -->
<div class="abs" style="left:1187px;top:36px;width:181px;height:28px;background:#333333;border-radius:5px;box-shadow:0 0 8px 2px rgba(0,0,0,0.36)"></div>
<svg class="abs" style="left:1195px;top:42px" width="16" height="16" viewBox="0 0 16 16"><g fill="#8b8b8b"><rect x="5" y="3" width="2" height="2"/><rect x="9" y="3" width="2" height="2"/><rect x="5" y="7" width="2" height="2"/><rect x="9" y="7" width="2" height="2"/><rect x="5" y="11" width="2" height="2"/><rect x="9" y="11" width="2" height="2"/></g></svg>
<svg class="abs" style="left:1214px;top:42px" width="16" height="16" viewBox="0 0 16 16"><g fill="none" stroke="#75beff" stroke-width="1.3"><path d="M2.5 2v12"/><path d="M5.5 2.5v11L14 8z" stroke-linejoin="round"/></g></svg>
<svg class="abs" style="left:1240px;top:42px" width="16" height="16" viewBox="0 0 16 16"><g fill="none" stroke="#75beff" stroke-width="1.4"><path d="M2.2 8.6a6 6 0 0 1 10.8-2.6"/><path d="M13.6 2.2v4.3H9.3"/></g><circle cx="7.6" cy="13" r="1.9" fill="#75beff"/></svg>
<svg class="abs" style="left:1266px;top:42px" width="16" height="16" viewBox="0 0 16 16"><g fill="none" stroke="#75beff" stroke-width="1.4"><path d="M8 1v8"/><path d="M4.2 5.2L8 9l3.8-3.8"/></g><circle cx="8" cy="13.3" r="1.9" fill="#75beff"/></svg>
<svg class="abs" style="left:1292px;top:42px" width="16" height="16" viewBox="0 0 16 16"><g fill="none" stroke="#75beff" stroke-width="1.4"><path d="M8 10V1.8"/><path d="M4.2 5.6L8 1.8l3.8 3.8"/></g><circle cx="8" cy="13.3" r="1.9" fill="#75beff"/></svg>
<svg class="abs" style="left:1318px;top:42px" width="16" height="16" viewBox="0 0 16 16"><g fill="none" stroke="#89d185" stroke-width="1.5"><path d="M3.3 5.6A5.3 5.3 0 1 1 3 10"/><path d="M2.6 2.2v4h4"/></g></svg>
<svg class="abs" style="left:1344px;top:42px" width="16" height="16" viewBox="0 0 16 16"><g fill="none" stroke="#f48771" stroke-width="1.3" transform="rotate(-45 8 8)"><path d="M-1.5 8H2"/><path d="M6 5H4.5A2.6 3 0 0 0 4.5 11H6z"/><path d="M6 6.7H8.2M6 9.3H8.2"/><path d="M8.6 4.6H10A3 3.4 0 0 1 10 11.4H8.6z"/><path d="M13 8H17.5"/></g></svg>

<!-- STATUS BAR -->
<div class="abs" style="left:0;top:871px;width:1389px;height:22px;background:#cc6633"></div>
<svg class="sbi" style="left:-9.0px" width="16" height="16" viewBox="0 0 16 16"><g fill="none" stroke="#fff" stroke-width="1.1"><rect x="2" y="3" width="12" height="10" rx="1"/></g></svg>
<div class="sb" style="left:9.0px;letter-spacing:0.00px">burrito</div>
<svg class="sbi" style="left:53.0px" width="16" height="16" viewBox="0 0 16 16"><g fill="none" stroke="#fff" stroke-width="1.1"><circle cx="5" cy="3.5" r="1.6"/><circle cx="5" cy="12.5" r="1.6"/><circle cx="11.5" cy="5" r="1.6"/><path d="M5 5.1v5.8M11.5 6.6c0 3-6.5 2-6.5 4.3"/></g></svg>
<div class="sb" style="left:72.0px;letter-spacing:0.00px">feat/debug*</div>
<svg class="sbi" style="left:146.0px" width="16" height="16" viewBox="0 0 16 16"><g fill="none" stroke="#fff" stroke-width="1.2"><path d="M2.5 8a5.5 5.5 0 0 1 9.8-3.4"/><path d="M13.5 8a5.5 5.5 0 0 1-9.8 3.4"/><path d="M12.8 1.8v3.2H9.6M3.2 14.2V11h3.2"/></g></svg>
<div class="sb" style="left:164.0px;letter-spacing:0.00px">0↓ 1↑</div>
<svg class="sbi" style="left:206.0px" width="16" height="16" viewBox="0 0 16 16"><g fill="none" stroke="#fff" stroke-width="1.1"><path d="M5 1.5v13M10 1.5v13"/><circle cx="5" cy="4" r="1.6"/><circle cx="12" cy="7" r="1.6"/><path d="M3 11l2 2 2-2"/></g></svg>
<svg class="sbi" style="left:236.0px" width="16" height="16" viewBox="0 0 16 16"><g fill="none" stroke="#fff" stroke-width="1.1"><path d="M14 2c-4 0-7 2.5-8.5 6.5l2 2C11.5 9 14 6 14 2z"/><path d="M5.5 8.5H3l2-3h3M7.5 10.5V13l3-2V8"/><path d="M2 14l2.5-2.5"/></g></svg>
<svg class="sbi" style="left:250.0px" width="16" height="16" viewBox="0 0 16 16"><g fill="none" stroke="#fff" stroke-width="1.1"><path d="M9 3.5l3.5 3.5-2.5 2.5L6.5 6z"/><path d="M6 7l-2.5 2.5L7 13l2.5-2.5z"/><path d="M12 4l2-2M2 14l1.8-1.8"/></g></svg>
<div class="sb" style="left:268.0px;letter-spacing:0.00px">Launchpad</div>
<svg class="sbi" style="left:346.0px" width="16" height="16" viewBox="0 0 16 16"><g fill="none" stroke="#fff" stroke-width="1.1"><circle cx="8" cy="8" r="6"/><path d="M5.5 5.5l5 5M10.5 5.5l-5 5"/></g></svg>
<div class="sb" style="left:363.0px;letter-spacing:0.00px">0</div>
<svg class="sbi" style="left:373.0px" width="16" height="16" viewBox="0 0 16 16"><g fill="none" stroke="#fff" stroke-width="1.1" stroke-linejoin="round"><path d="M8 2L14.5 14h-13z"/><path d="M8 6.5v4M8 11.8v1"/></g></svg>
<div class="sb" style="left:389.0px;letter-spacing:0.00px">0</div>
<svg class="sbi" style="left:400.0px" width="16" height="16" viewBox="0 0 16 16"><g fill="none" stroke="#fff" stroke-width="1.1"><circle cx="8" cy="8" r="6"/><path d="M8 7v4.5M8 4.8v1.2"/></g></svg>
<div class="sb" style="left:417.0px;letter-spacing:0.00px">1</div>
<svg class="sbi" style="left:439.0px" width="16" height="16" viewBox="0 0 16 16"><g fill="none" stroke="#fff" stroke-width="1.1"><path d="M6 2.5v7.5l8-3.8z"/><circle cx="5" cy="12" r="2.5"/><path d="M1.5 10.5h1.5M1.5 13.5h1.5M5 9V7.5"/></g></svg>
<div class="sb" style="left:458.0px;letter-spacing:0.00px">Attach to Controller (burrito)</div>
<div class="sb" style="left:634.0px;letter-spacing:0.00px">burrito-system@kind</div>
<div class="sb" style="left:768.0px;letter-spacing:0.00px">burrito-system</div>
<div class="sb" style="left:867.0px;letter-spacing:0.00px">Git Graph</div>
<div class="sb" style="left:1053.0px;letter-spacing:-0.50px">Ln 61, Col 1</div>
<div class="sb" style="left:1134.0px;letter-spacing:-0.55px">Tab Size: 4</div>
<div class="sb" style="left:1207.0px;letter-spacing:-0.70px">UTF-8</div>
<div class="sb" style="left:1256.0px;letter-spacing:-0.50px">LF</div>
<svg class="sbi" style="left:1282.0px" width="16" height="16" viewBox="0 0 16 16"><path d="M6 3c-1.5 0-2 .5-2 2v1.5c0 1-.5 1.5-1.5 1.5 1 0 1.5.5 1.5 1.5V11c0 1.5.5 2 2 2" fill="none" stroke="#fff" stroke-width="1"/><path d="M9 3.5c1 0 1.5.5 1.5 1.5v3" fill="none" stroke="#fff" stroke-width="1"/><circle cx="10.5" cy="11.5" r="2.2" fill="#fff"/></svg>
<div class="sb" style="left:1303.0px;letter-spacing:0.00px">Go</div>
<svg class="sbi" style="left:1332.0px" width="16" height="16" viewBox="0 0 16 16"><g fill="none" stroke="#fff" stroke-width="1.2"><path d="M3 7.5c-1-4 2-5.5 5-4 3-1.5 6 0 5 4"/><path d="M2.5 7.5v3c0 2 2.5 3.5 5.5 3.5s5.5-1.5 5.5-3.5v-3z"/></g><g fill="#fff"><rect x="5.5" y="9" width="1.3" height="2.5"/><rect x="9.2" y="9" width="1.3" height="2.5"/></g></svg>
<div class="sb" style="left:1362.0px;letter-spacing:0.00px">1.23.4</div>
</body></html>
